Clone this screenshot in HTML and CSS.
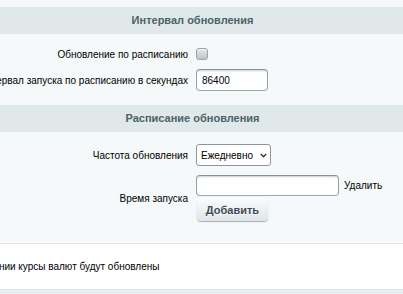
FILE: index.html
```html
<!DOCTYPE html>
<html lang="ru">
<head>
<meta charset="utf-8">
<link rel="stylesheet" href="styles.css">
</head>
<body>
<div class="page">
  <div class="heading">Интервал обновления</div>
  <div class="section s1">
    <div class="row">
      <div class="label">Обновление по расписанию</div>
      <div class="field"><span class="checkbox"></span></div>
    </div>
    <div class="row">
      <div class="label">Интервал запуска по расписанию в секундах</div>
      <div class="field"><input class="text short" type="text" value="86400"></div>
    </div>
  </div>
  <div class="heading">Расписание обновления</div>
  <div class="section s2">
    <div class="row">
      <div class="label">Частота обновления</div>
      <div class="field">
        <div class="select-wrap">
          <select class="select"><option>Ежедневно</option></select>
          <svg class="chev" width="7" height="5" viewBox="0 0 7 5"><path d="M0.8 1 L3.5 3.8 L6.2 1" fill="none" stroke="#333" stroke-width="1.3"/></svg>
        </div>
      </div>
    </div>
    <div class="row">
      <div class="label">Время запуска</div>
      <div class="field stack">
        <div class="line">
          <input class="text long" type="text" value="">
          <span class="link">Удалить</span>
        </div>
        <button class="btn" type="button">Добавить</button>
      </div>
    </div>
  </div>
  <div class="note"><span class="note-text">При сохранении курсы валют будут обновлены</span></div>
  <div class="footer"></div>
</div>
</body>
</html>
```
FILE: styles.css
```css
html, body {
  margin: 0;
  padding: 0;
}
body {
  background: #f5f9f9;
  font-family: "Liberation Sans", Arial, sans-serif;
  font-size: 10px;
  color: #000;
  overflow: hidden;
  width: 403px;
  height: 294px;
}
.page {
  margin-left: -18px;
  width: 421px;
  padding-top: 7px;
}
.heading {
  height: 27px;
  line-height: 27px;
  background: #e0e8ea;
  text-align: center;
  font-weight: bold;
  font-size: 11px;
  color: #4b6267;
}
.section {
  display: flex;
  flex-direction: column;
  gap: 9px;
}
.s1 {
  padding: 14px 0 14px;
}
.s2 {
  padding: 12px 0 22px;
}
.row {
  display: grid;
  grid-template-columns: 211px 1fr;
  align-items: center;
}
.label {
  text-align: right;
  padding-right: 5px;
  white-space: nowrap;
  overflow: hidden;
  direction: rtl;
}
.field {
  padding-left: 3px;
  display: flex;
  align-items: center;
}
.stack {
  flex-direction: column;
  align-items: flex-start;
  gap: 2px;
}
.line {
  display: flex;
  align-items: center;
  gap: 5px;
}
.checkbox {
  display: block;
  width: 12px;
  height: 12px;
  box-sizing: border-box;
  border: 1px solid #9aa3a6;
  border-radius: 3px;
  background: linear-gradient(#e4e8e9, #bfc6c8);
  box-shadow: inset 0 1px 0 rgba(255,255,255,0.6);
}
.text {
  box-sizing: border-box;
  height: 22px;
  margin: 0;
  padding: 0 5px;
  border: 1px solid;
  border-color: #87919c #959ea9 #9ea7b1;
  border-radius: 4px;
  background: #fff;
  box-shadow: inset 0 2px 2px -1px rgba(180,188,191,0.7);
  font-family: "Liberation Sans", Arial, sans-serif;
  font-size: 10px;
  color: #000;
  outline: none;
}
.short { width: 72px; }
.long { width: 143px; height: 21px; }
.select-wrap {
  position: relative;
  width: 75px;
  height: 22px;
}
.select {
  -webkit-appearance: none;
  appearance: none;
  box-sizing: border-box;
  width: 75px;
  height: 22px;
  margin: 0;
  font-family: "Liberation Sans", Arial, sans-serif;
  font-size: 10px;
  color: #000;
  background: #fff;
  border: 1px solid #8f9699;
  border-radius: 3px;
  padding: 0 0 0 4px;
  outline: none;
}
.chev {
  position: absolute;
  right: 4px;
  top: 9px;
  pointer-events: none;
}
.link {
  font-size: 10px;
  color: #000;
}
.btn {
  box-sizing: border-box;
  width: 71px;
  height: 23px;
  margin: 0 0 0 1px;
  padding: 0;
  border: none;
  border-radius: 4px;
  background: linear-gradient(#fbfcfc, #dde6e9);
  box-shadow: 0 0 1px rgba(0,0,0,0.11), 0 1px 1px rgba(0,0,0,0.3), inset 0 1px #fff;
  font-family: "Liberation Sans", Arial, sans-serif;
  font-size: 11px;
  font-weight: bold;
  color: #3f4b54;
  text-shadow: 0 1px rgba(255,255,255,0.7);
}
.note {
  border-top: 1px solid #dce5e7;
  border-bottom: 1px solid #dce5e7;
  background: #fff;
  height: 45px;
  display: flex;
  align-items: center;
  padding-left: 18px;
}
.note-text {
  margin-left: -60px;
  white-space: nowrap;
}
.footer {
  height: 10px;
  background: #e8eef0;
}
```
